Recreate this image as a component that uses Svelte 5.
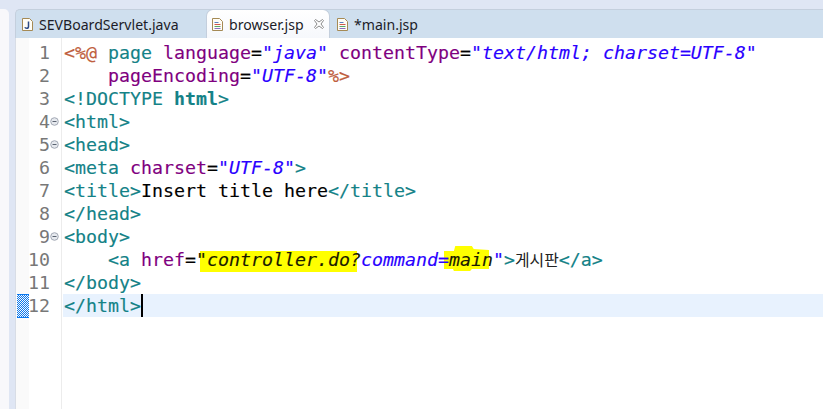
<script>
    const tabs = [
        { name: 'SEVBoardServlet.java', type: 'java' },
        { name: 'browser.jsp', type: 'jsp', active: true },
        { name: '*main.jsp', type: 'jsp' }
    ];

    // each line is a list of [css class, text]
    const lines = [
        { fold: false, parts: [['dir', '<%@'], ['', ' '], ['tag', 'page'], ['', ' '], ['attr', 'language'], ['', '='], ['str', '"java"'], ['', ' '], ['attr', 'contentType'], ['', '='], ['str', '"text/html; charset=UTF-8"']] },
        { fold: false, parts: [['', '    '], ['attr', 'pageEncoding'], ['', '='], ['str', '"UTF-8"'], ['dir', '%>']] },
        { fold: false, parts: [['tag', '<!DOCTYPE '], ['tag b', 'html'], ['tag', '>']] },
        { fold: true, parts: [['tag', '<html>']] },
        { fold: true, parts: [['tag', '<head>']] },
        { fold: false, parts: [['tag', '<meta '], ['attr', 'charset'], ['', '='], ['str', '"UTF-8"'], ['tag', '>']] },
        { fold: false, parts: [['tag', '<title>'], ['', 'Insert title here'], ['tag', '</title>']] },
        { fold: false, parts: [['tag', '</head>']] },
        { fold: true, parts: [['tag', '<body>']] },
        { fold: false, marked: true, parts: [['', '    '], ['tag', '<a '], ['attr', 'href'], ['', '='], ['str dark', '"controller.do?'], ['str', 'command='], ['str dark', 'main'], ['str', '"'], ['tag', '>'], ['ko', '게시판'], ['tag', '</a>']] },
        { fold: false, parts: [['tag', '</body>']] },
        { fold: false, current: true, parts: [['tag', '</html>']] }
    ];
</script>

<div class="window">
    <div class="side"></div>
    <div class="pane">
        <div class="tabs">
            {#each tabs as tab}
                <div class="tab" class:active={tab.active}>
                    <svg class="file" width="13" height="15" viewBox="0 0 13 15">
                        <path d="M1.500 1.500h7l3 3v9h-10z" fill="#fffdf6" stroke="#a58a55" />
                        {#if tab.type === 'java'}
                            <path d="M7.500 4.500v5q0 1.800-1.700 1.800t-1.500-1.200" fill="none" stroke="#2a4a86" stroke-width="1.500" />
                        {:else}
                            <path d="M3.500 5.500h4" stroke="#5a7fc0" />
                            <path d="M3.500 7.500h6" stroke="#d0584a" />
                            <path d="M3.500 9.500h6" stroke="#58a868" />
                            <path d="M3.500 11.500h6" stroke="#8a6fc0" />
                        {/if}
                    </svg>
                    <span>{tab.name}</span>
                    {#if tab.active}
                        <svg class="close" width="12" height="12" viewBox="0 0 12 12">
                            <path d="M1.500 2.500l1-1 3.500 2.500 3.500-2.500 1 1-2.500 3.500 2.500 3.500-1 1-3.500-2.500-3.500 2.500-1-1 2.500-3.500z" fill="#fff" stroke="#8a8a8a" />
                        </svg>
                    {/if}
                </div>
            {/each}
        </div>
        <div class="editor">
            <div class="ruler">
                {#each lines as line}
                    <div class="mark">
                        {#if line.current}
                            <svg width="12" height="24" shape-rendering="crispEdges">
                                {#each Array(24) as _, y}
                                    {#each Array(12) as _, x}
                                        {#if y === 0 || y === 23 || (x + y) % 2 === 0}
                                            <rect {x} {y} width="1" height="1" fill="#0a78f0" />
                                        {/if}
                                    {/each}
                                {/each}
                            </svg>
                        {/if}
                    </div>
                {/each}
            </div>
            <div class="gutter">
                {#each lines as line, i}
                    <div class="num">
                        <span>{i + 1}</span>
                        <i class="fold">
                            {#if line.fold}
                                <svg width="9" height="9" viewBox="0 0 9 9">
                                    <circle cx="4.500" cy="4.500" r="3.800" fill="#e6e9ee" stroke="#a2a8b4" />
                                    <path d="M2.500 4.500h4" stroke="#5a6270" />
                                </svg>
                            {/if}
                        </i>
                    </div>
                {/each}
            </div>
            <div class="code">
                {#each lines as line}
                    <div class="line" class:current={line.current}>
                        {#if line.marked}
                            <i class="pen pen-a"></i>
                            <i class="pen pen-b"></i>
                        {/if}
                        <span class="text">{#each line.parts as part}<span class={part[0]}>{part[1]}</span>{/each}{#if line.current}<span class="caret"></span>{/if}</span>
                    </div>
                {/each}
            </div>
        </div>
    </div>
</div>

<style>
    :global(body) {
        margin: 0;
        background: #dfe6f4;
    }
    .window {
        display: flex;
        height: 409px;
        width: 823px;
        overflow: hidden;
    }
    .side {
        width: 9px;
        margin-top: 9px;
        background: #f8f8fb;
        border-radius: 0 5px 0 0;
        flex: none;
    }
    .pane {
        flex: 1;
        margin-left: 6px;
        margin-top: 9px;
        display: flex;
        flex-direction: column;
        min-width: 0;
    }
    .tabs {
        display: flex;
        height: 29px;
        background: #cfdfee;
        border-top: 1px solid #c4cfdd;
        border-left: 1px solid #c4cfdd;
        border-radius: 5px 0 0 0;
        font-family: "Noto Sans", "Open Sans", sans-serif;
        font-size: 14.100px;
        color: #1c1c28;
        flex: none;
        box-sizing: border-box;
    }
    .tab {
        display: flex;
        align-items: center;
        gap: 5px;
        height: 28px;
        box-sizing: border-box;
    }
    .tab:first-child {
        width: 190px;
        padding-left: 5px;
    }
    .tab.active {
        width: 124px;
        padding-left: 4px;
        background: linear-gradient(#fff, #f6f8fc);
        border-radius: 7px 7px 0 0;
        border: 1px solid #c4cfdd;
        border-bottom: none;
        margin-top: -1px;
        height: 29px;
    }
    .tab:last-child {
        padding-left: 6px;
    }
    .close {
        margin-left: 4px;
    }
    .file {
        flex: none;
    }
    .editor {
        flex: 1;
        display: flex;
        background: #fff;
        font-family: "DejaVu Sans Mono", monospace;
        font-size: 18.270px;
        line-height: 23px;
        border-left: 1px solid #d8dde6;
    }
    .ruler {
        width: 12px;
        padding-left: 1px;
        padding-top: 3px;
        background: #fafafa;
        flex: none;
    }
    .mark {
        height: 23px;
    }
    .mark svg {
        display: block;
    }
    .gutter {
        width: 32px;
        flex: none;
        color: #787878;
        border-right: 1px solid #ececec;
        padding-top: 3px;
    }
    .num {
        display: flex;
        justify-content: flex-end;
        height: 23px;
    }
    .fold {
        width: 11px;
        flex: none;
        display: flex;
        align-items: center;
    }
    .code {
        flex: 1;
        padding-left: 1px;
        padding-top: 3px;
        color: #000;
        -webkit-text-stroke: 0.15px;
    }
    .line {
        height: 23px;
        padding-left: 1px;
        position: relative;
    }
    .line.current {
        background: #e8f2fe;
    }
    .text {
        position: relative;
        white-space: pre;
    }
    /* highlighter strokes sit under the text */
    .pen {
        position: absolute;
        background: #ffff00;
    }
    .pen-a {
        left: 137px;
        top: 3px;
        width: 157px;
        height: 21px;
    }
    .pen-b {
        left: 381px;
        top: -2px;
        width: 45px;
        height: 25px;
        clip-path: polygon(0 20%, 22% 20%, 25% 0, 62% 0, 66% 12%, 100% 16%, 100% 92%, 62% 92%, 58% 100%, 22% 100%, 20% 92%, 0 92%);
    }
    .dir { color: #bf5f3f; }
    .tag { color: #148287; }
    .b { font-weight: 700; }
    .attr { color: #7f007f; }
    .str { color: #2a00ff; font-style: italic; }
    .dark { color: #1a1a00; }
    .ko {
        font-family: "Noto Sans CJK KR", sans-serif;
        font-size: 15.900px;
        color: #222;
        -webkit-text-stroke: 0;
    }
    .caret {
        display: inline-block;
        width: 2px;
        height: 23px;
        background: #000;
        vertical-align: top;
    }
</style>
